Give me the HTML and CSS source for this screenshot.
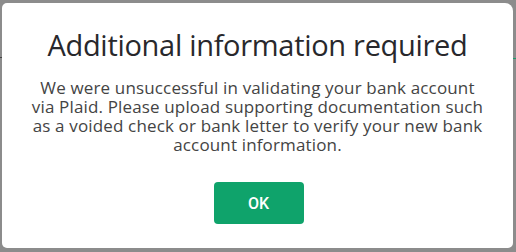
FILE: index.html
```html
<!DOCTYPE html>
<html lang="en">

<head>
    <meta charset="UTF-8">
    <meta name="viewport" content="width=device-width, initial-scale=1">
    <title>Additional information required</title>
    <link rel="stylesheet" href="styles.css">
</head>

<body>
    <div class="backdrop">
        <span class="behind-line left"></span>
        <span class="behind-line right"></span>
        <div class="dialog">
            <h1 class="dialog-title">Additional information required</h1>
            <p class="dialog-text">We were unsuccessful in validating your bank account<br>
                via Plaid. Please upload supporting documentation such<br>
                as a voided check or bank letter to verify your new bank<br>
                account information.</p>
            <div class="dialog-actions">
                <button class="ok-button">OK</button>
            </div>
        </div>
    </div>
</body>

</html>
```

FILE: styles.css
```css
body,
h1,
p {
    margin: 0;
    padding: 0;
}

body {
    font-family: 'Open Sans', 'Liberation Sans', sans-serif;
    background: #8c8c8c;
    width: 516px;
    height: 252px;
    overflow: hidden;
}

.backdrop {
    position: relative;
    padding: 3px 3px 4px 2px;
    height: 252px;
    box-sizing: border-box;
}

/* bits of the page peeking out behind the modal */
.behind-line {
    position: absolute;
    height: 1px;
    width: 3px;
    top: 57px;
}

.behind-line.left {
    left: 0;
    background: #444;
}

.behind-line.right {
    right: 0;
    top: 58px;
    background: #1a9a6a;
}

.dialog {
    position: relative;
    background: #fff;
    height: 100%;
    border-radius: 5px 8px 5px 5px;
    text-align: center;
    box-sizing: border-box;
    padding-top: 24px;
}

.dialog-title {
    font-size: 29px;
    font-weight: 400;
    color: #28282c;
    line-height: 36px;
    letter-spacing: -0.3px;
}

.dialog-text {
    margin: 15px 20px 0;
    font-size: 17px;
    line-height: 19px;
    letter-spacing: 0.15px;
    color: #444;
}

.dialog-actions {
    display: flex;
    justify-content: center;
    margin-top: 28px;
    padding-left: 2px;
}

.ok-button {
    background-color: #0fa36b;
    border: none;
    border-radius: 4px;
    width: 90px;
    height: 42px;
    color: #fff;
    font-family: 'Roboto', sans-serif;
    font-size: 16px;
    font-weight: 500;
    cursor: pointer;
}
```
